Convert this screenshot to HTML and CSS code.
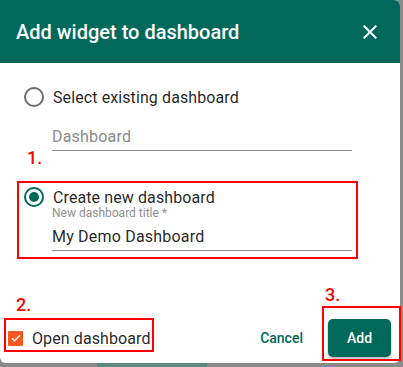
FILE: index.html
```html
<!DOCTYPE html>
<html lang="en">
  <head>
    <meta charset="UTF-8" />
    <title>Add widget to dashboard</title>
    <link rel="stylesheet" href="styles.css">
  </head>
  <body>
    <div class="backdrop">
      <div class="dialog">
        <div class="dialog-header">
          <h2 class="dialog-title">Add widget to dashboard</h2>
          <button class="close-btn" aria-label="Close">
            <svg width="24" height="24" viewBox="0 0 24 24">
              <path d="M19 6.41L17.59 5 12 10.59 6.41 5 5 6.41 10.59 12 5 17.59 6.41 19 12 13.41 17.59 19 19 17.59 13.41 12z" fill="#ffffff" />
            </svg>
          </button>
        </div>

        <div class="dialog-content">
          <div class="option">
            <span class="radio"></span>
            <span class="option-label">Select existing dashboard</span>
          </div>
          <div class="field field-empty">
            <span class="placeholder">Dashboard</span>
          </div>

          <div class="option-group">
            <div class="option">
              <span class="radio checked"></span>
              <span class="option-label">Create new dashboard</span>
            </div>
            <div class="field field-filled">
              <span class="field-label">New dashboard title *</span>
              <span class="field-value">My Demo Dashboard</span>
            </div>
            <span class="mark mark-1">1.</span>
            <span class="mark-box mark-box-1"></span>
          </div>
        </div>

        <div class="dialog-actions">
          <label class="checkbox-row">
            <span class="checkbox">
              <svg width="12" height="12" viewBox="0 0 24 24">
                <path d="M4 12.5l5 5L20 6.5" fill="none" stroke="#ffffff" stroke-width="2.6" />
              </svg>
            </span>
            <span class="checkbox-label">Open dashboard</span>
            <span class="mark mark-2">2.</span>
            <span class="mark-box mark-box-2"></span>
          </label>
          <div class="spacer"></div>
          <button class="btn-text">Cancel</button>
          <div class="add-wrap">
            <button class="btn-add">Add</button>
            <span class="mark mark-3">3.</span>
            <span class="mark-box mark-box-3"></span>
          </div>
        </div>
      </div>
      <div class="backdrop-bottom">
        <span class="bd-gray"></span>
        <span class="bd-green"></span>
        <span class="bd-gray"></span>
      </div>
    </div>
  </body>
</html>
```

FILE: styles.css
```css
* {
  margin: 0;
  padding: 0;
  box-sizing: border-box;
}

body {
  font-family: Roboto, "Noto Sans", sans-serif;
  background: #8b8b8b;
  width: 403px;
  height: 367px;
  overflow: hidden;
  color: rgba(0, 0, 0, 0.87);
}

.backdrop {
  position: relative;
  width: 403px;
  height: 367px;
}

.dialog {
  width: 400px;
  height: 363px;
  background: #ffffff;
  border-radius: 0 6px 6px 6px;
  display: flex;
  flex-direction: column;
  position: relative;
  z-index: 1;
}

.dialog-header {
  height: 63px;
  background: #00695c;
  border-radius: 0 6px 0 0;
  display: flex;
  align-items: center;
  justify-content: space-between;
  padding: 0 18px 0 16px;
}

.dialog-title {
  color: #ffffff;
  font-size: 20px;
  font-weight: 500;
  margin-top: 1px;
}

.close-btn {
  background: none;
  border: none;
  width: 24px;
  height: 24px;
  display: flex;
  margin-top: 1px;
}

.dialog-content {
  padding: 24px 48px 0 24px;
  display: flex;
  flex-direction: column;
}

.option {
  display: flex;
  align-items: center;
  gap: 9px;
  height: 20px;
}

.option-label {
  font-size: 16px;
  letter-spacing: 0.1px;
}

.radio {
  width: 20px;
  height: 20px;
  border: 2px solid #6e6e6e;
  border-radius: 50%;
  display: flex;
  align-items: center;
  justify-content: center;
}

.radio.checked {
  border-color: #00695c;
}

.radio.checked::after {
  content: "";
  width: 10px;
  height: 10px;
  border-radius: 50%;
  background: #00695c;
}

.field {
  margin-left: 28px;
  border-bottom: 1px solid #8a8a8a;
  display: flex;
  flex-direction: column;
}

.field-empty {
  margin-top: 17px;
  height: 27px;
  padding-top: 3px;
}

.placeholder {
  font-size: 16px;
  color: #8a8a8a;
  letter-spacing: 0.2px;
}

.option-group {
  position: relative;
  margin-top: 36px;
}

.field-filled {
  height: 44px;
}

.field-label {
  font-size: 12px;
  color: #8f8f8f;
  margin-top: -1px;
}

.field-value {
  font-size: 16px;
  margin-top: 7px;
  letter-spacing: 0.2px;
}

.dialog-actions {
  margin-top: auto;
  height: 50px;
  display: flex;
  align-items: center;
  padding: 0 9px 0 8px;
}

.checkbox-row {
  position: relative;
  height: 20px;
  display: flex;
  align-items: center;
  gap: 9px;
}

.checkbox {
  width: 15px;
  height: 15px;
  background: #ff5722;
  border-radius: 1px;
  display: flex;
  align-items: center;
  justify-content: center;
}

.checkbox-label {
  font-size: 16px;
  letter-spacing: 0.1px;
}

.spacer {
  flex: 1;
}

.btn-text {
  background: none;
  border: none;
  color: #00695c;
  font-family: Roboto, sans-serif;
  font-size: 14px;
  font-weight: 500;
  padding: 0 8px;
  height: 36px;
  margin-right: 17px;
}

.add-wrap {
  position: relative;
  display: flex;
}

.btn-add {
  background: #00695c;
  color: #ffffff;
  border: none;
  border-radius: 5px;
  font-family: Roboto, sans-serif;
  font-size: 14px;
  font-weight: 500;
  width: 63px;
  height: 38px;
  box-shadow: 0 2px 3px rgba(0, 0, 0, 0.3);
}

/* annotations drawn over the dialog */
.mark {
  position: absolute;
  color: #ff0000;
  font-size: 18px;
  font-weight: 500;
  line-height: 18px;
}

.mark-box {
  position: absolute;
  border: 2px solid #ff0000;
}

.mark-1 {
  left: 3px;
  top: -38px;
}

.mark-box-1 {
  left: -7px;
  top: -6px;
  width: 341px;
  height: 78px;
}

.mark-2 {
  left: 8px;
  top: -32px;
}

.mark-box-2 {
  left: -4px;
  top: -10px;
  width: 150px;
  height: 34px;
}

.mark-3 {
  left: -3px;
  top: -33px;
}

.mark-box-3 {
  left: -6px;
  top: -13px;
  width: 79px;
  height: 55px;
}

.backdrop-bottom {
  display: flex;
  height: 4px;
}

.bd-gray {
  width: 97px;
  background: #8a8a8a;
}

.bd-green {
  width: 110px;
  background: #5d8a7e;
}

.bd-gray:last-child {
  flex: 1;
}
```
